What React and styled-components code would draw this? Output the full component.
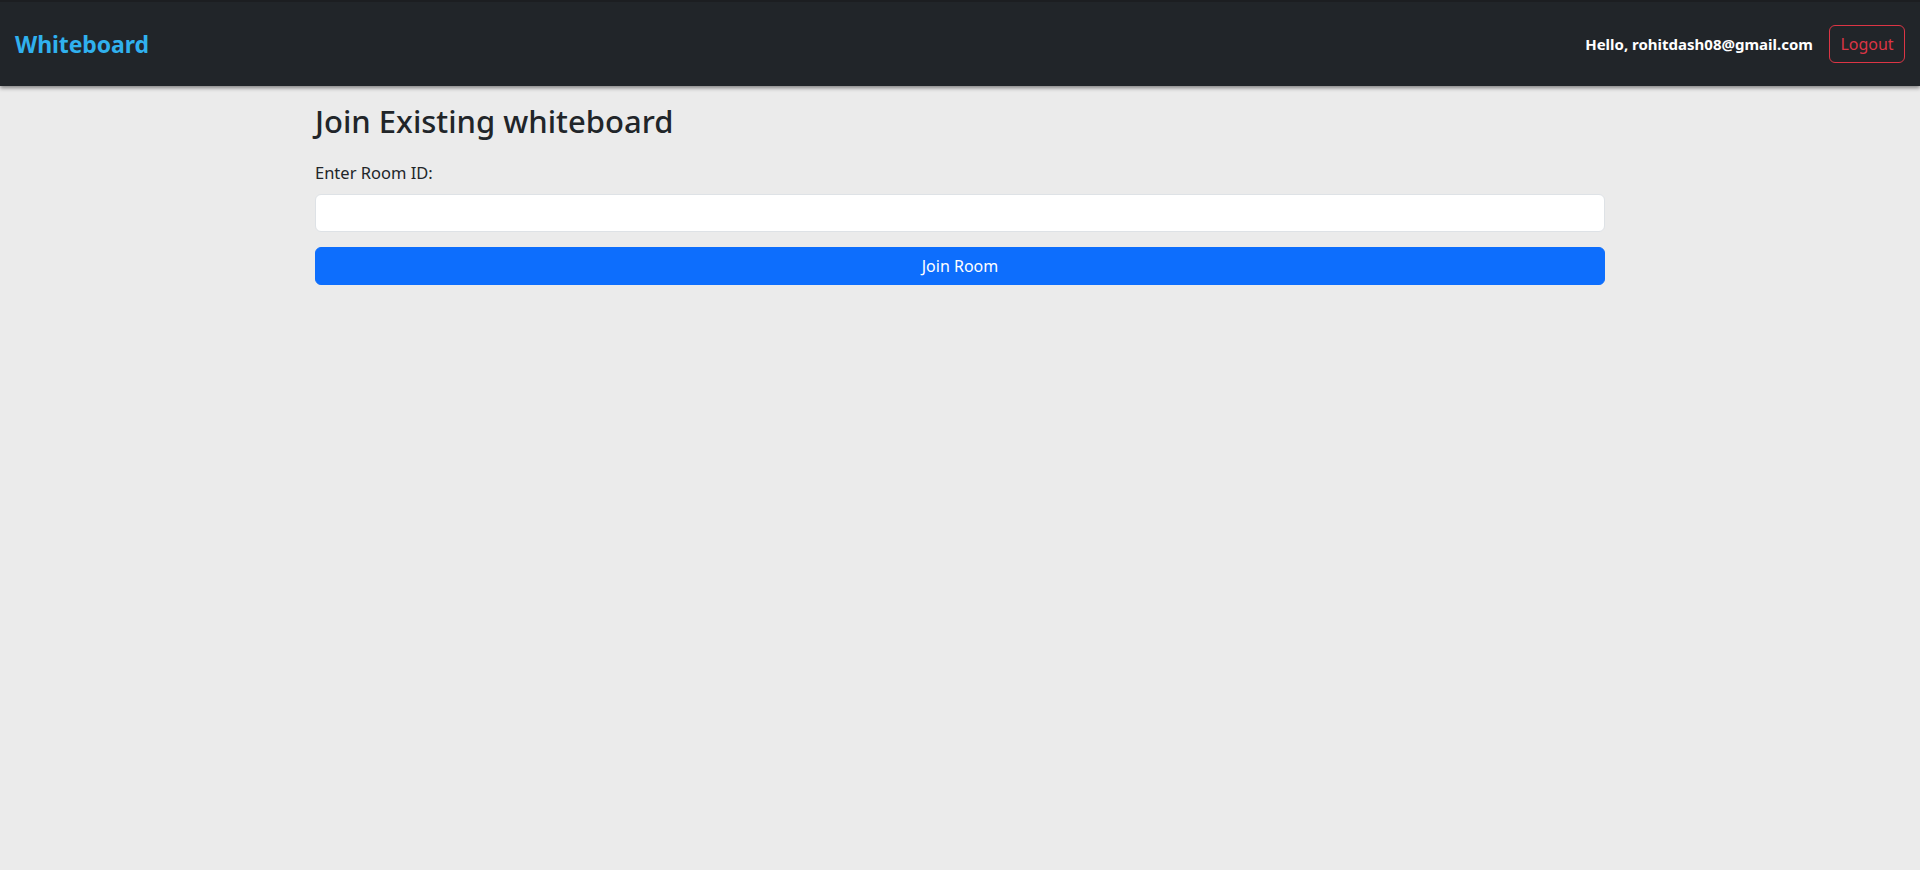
import React from "react"
import styled, { createGlobalStyle } from "styled-components"

const GlobalStyle = createGlobalStyle`
  html, body {
    margin: 0;
    padding: 0;
    background: #ebebeb;
    font-family: "Noto Sans", "Open Sans", sans-serif;
    color: #212529;
  }
  * {
    box-sizing: border-box;
  }
`

export default function App() {
  return (
    <>
      <GlobalStyle />
      <Page>
        <Navbar>
          <Brand href="#">Whiteboard</Brand>
          <NavRight>
            <Greeting>Hello, rohitdash08@gmail.com</Greeting>
            <LogoutButton>Logout</LogoutButton>
          </NavRight>
        </Navbar>
        <Container>
          <Title>Join Existing whiteboard</Title>
          <Label htmlFor="room">Enter Room ID:</Label>
          <Input id="room" type="text" />
          <JoinButton>Join Room</JoinButton>
        </Container>
      </Page>
    </>
  )
}

const Page = styled.div`
  min-height: 870px;
  background: #ebebeb;
`
const Navbar = styled.nav`
  height: 86px;
  background: #212529;
  border-top: 2px solid #1c1e21;
  box-shadow: 0 2px 4px rgba(0, 0, 0, 0.45);
  display: flex;
  align-items: center;
  justify-content: space-between;
  padding: 0 15px;
`
const Brand = styled.a`
  color: #30b1ee;
  font-size: 23px;
  font-weight: 700;
  text-decoration: none;
  letter-spacing: -0.1px;
`
const NavRight = styled.div`
  display: flex;
  align-items: center;
  gap: 16px;
`
const Greeting = styled.span`
  color: #fff;
  font-size: 15px;
  font-weight: 700;
`
const LogoutButton = styled.button`
  height: 38px;
  width: 76px;
  background: transparent;
  border: 1px solid #dc3545;
  border-radius: 6px;
  color: #dc3545;
  font-family: inherit;
  font-size: 16px;
  cursor: pointer;
`
const Container = styled.main`
  width: 1290px;
  margin: 0 auto;
  padding-top: 17px;
  display: flex;
  flex-direction: column;
`
const Title = styled.h2`
  margin: 0 0 8px;
  font-size: 31px;
  font-weight: 500;
  line-height: 1.2;
`
const Label = styled.label`
  margin: 13px 0 9px;
  font-size: 16.5px;
  line-height: 24px;
`
const Input = styled.input`
  height: 38px;
  background: #fff;
  border: 1px solid #dee2e6;
  border-radius: 6px;
  padding: 6px 12px;
  font-size: 16px;
  font-family: inherit;
  outline: none;
`
const JoinButton = styled.button`
  margin-top: 15px;
  height: 38px;
  background: #0d6efd;
  border: 1px solid #0d6efd;
  border-radius: 6px;
  color: #fff;
  font-family: inherit;
  font-size: 16px;
  cursor: pointer;
`
